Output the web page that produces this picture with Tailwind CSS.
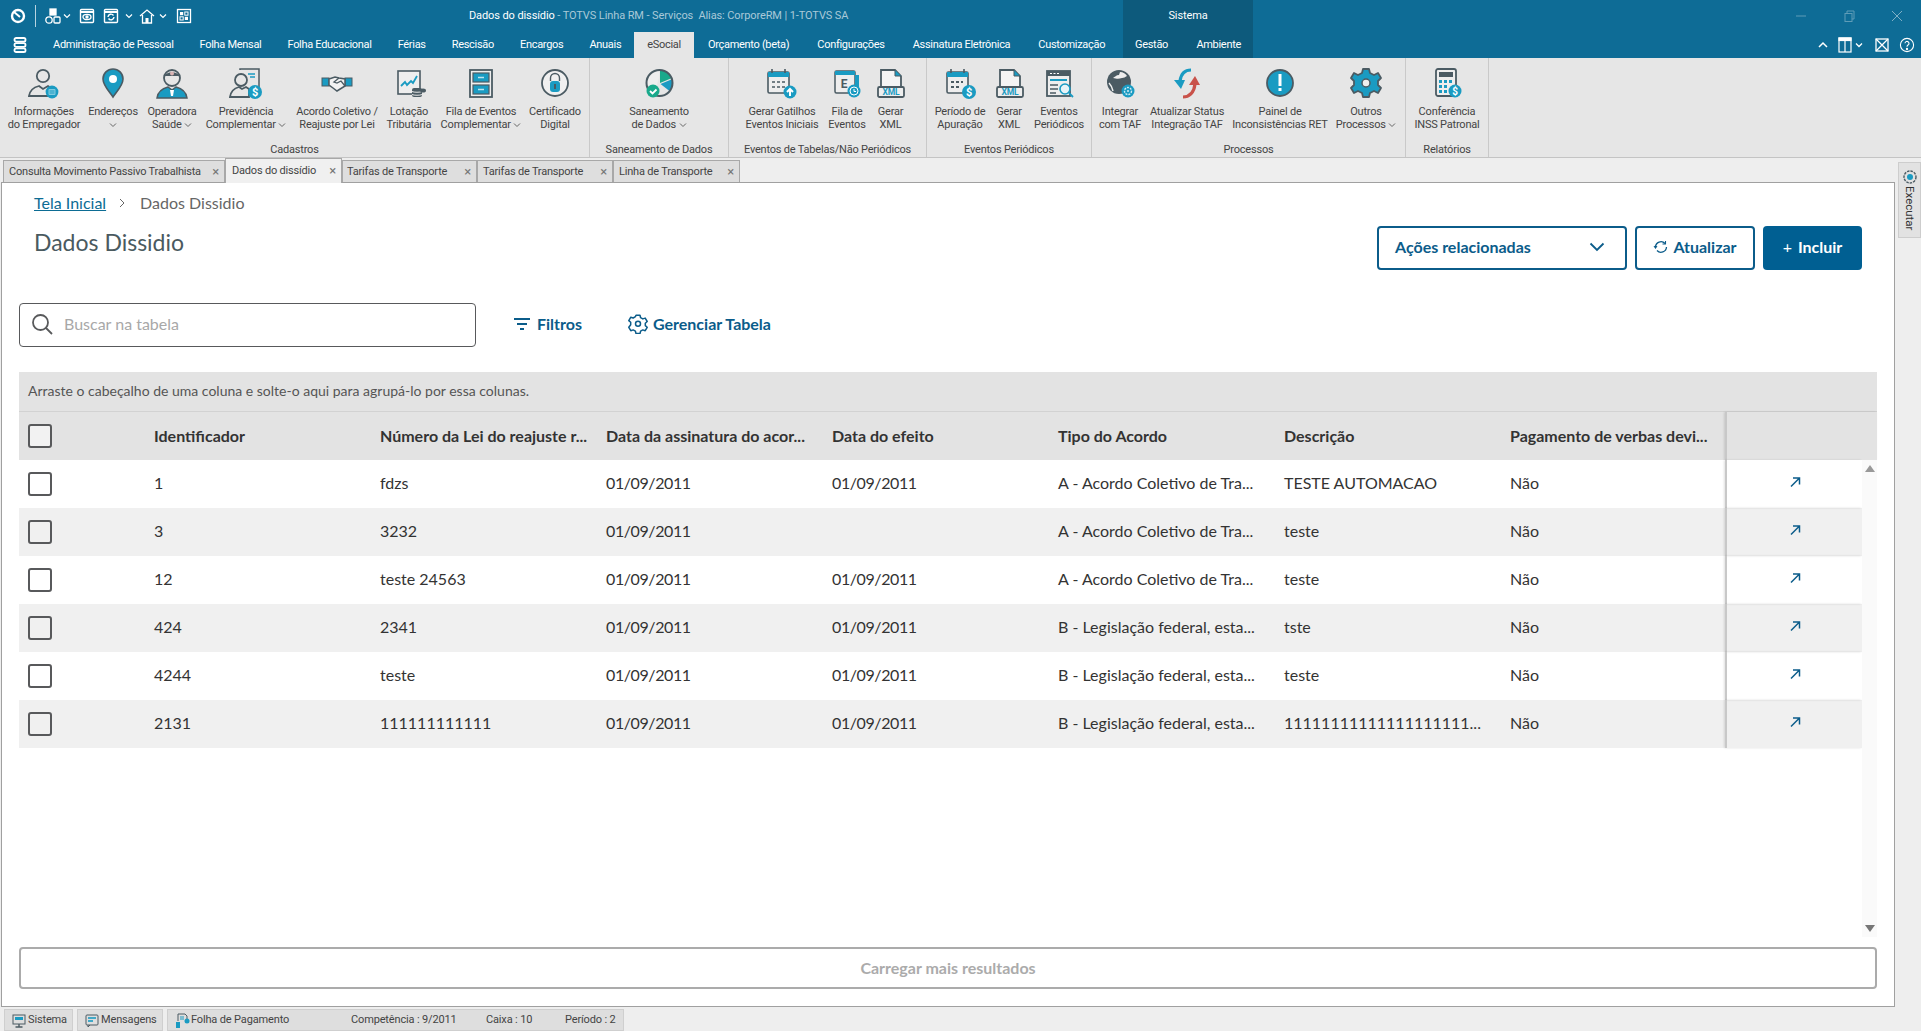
<!DOCTYPE html>
<html lang="pt-BR">
<head>
<meta charset="UTF-8">
<title>Dados do dissídio</title>
<script src="https://cdn.jsdelivr.net/npm/@tailwindcss/browser@4"></script>
</head>
<body class="bg-[#eeeeee] font-['Roboto',sans-serif] overflow-hidden">
<div class="relative h-[1031px] w-full flex flex-col overflow-hidden">

  <!-- Title bar -->
  <div class="h-[32px] bg-[#0e6c96] relative flex items-center text-white text-[11px] tracking-[-0.1px] shrink-0">
    <svg class="ml-[8px] w-[20px] h-[20px]" viewBox="0 0 20 20" fill="none" stroke="#fff" stroke-width="2.4"><circle cx="10" cy="10" r="6"/><path d="M6 6l6 5" stroke-width="2"/></svg>
    <div class="w-px h-[22px] bg-white/70 ml-[7px]"></div>
    <svg class="ml-[8px] w-[18px] h-[18px]" viewBox="0 0 18 18" fill="none" stroke="#fff" stroke-width="1.3"><rect x="6" y="2" width="6" height="6" fill="#fff"/><circle cx="5" cy="13" r="3.2"/><rect x="10" y="10" width="6" height="6" rx="1"/></svg>
    <svg class="ml-[1px] w-[8px] h-[8px]" viewBox="0 0 8 8" fill="none" stroke="#fff" stroke-width="1.2"><path d="M1 2.5l3 3 3-3"/></svg>
    <svg class="ml-[8px] w-[16px] h-[16px]" viewBox="0 0 16 16" fill="none" stroke="#fff" stroke-width="1.4"><rect x="1.5" y="1.5" width="13" height="13" rx="1"/><path d="M2 4h12" stroke-width="2"/><ellipse cx="8" cy="9" rx="4" ry="2.6"/><circle cx="8" cy="9" r="1" fill="#fff"/></svg>
    <svg class="ml-[8px] w-[16px] h-[16px]" viewBox="0 0 16 16" fill="none" stroke="#fff" stroke-width="1.4"><rect x="1.5" y="1.5" width="13" height="13" rx="1"/><path d="M2 4h12" stroke-width="2"/><path d="M5 9a3 3 0 0 1 5.5-1.5M11 9a3 3 0 0 1-5.5 1.5"/></svg>
    <svg class="ml-[6px] w-[8px] h-[8px]" viewBox="0 0 8 8" fill="none" stroke="#fff" stroke-width="1.2"><path d="M1 2.5l3 3 3-3"/></svg>
    <svg class="ml-[5px] w-[18px] h-[18px]" viewBox="0 0 18 18" fill="none" stroke="#fff" stroke-width="1.3"><path d="M2 9l7-6 7 6M4.500 8v8h9V8"/><rect x="7.500" y="11" width="3" height="5" fill="#fff" stroke="none"/></svg>
    <svg class="ml-[3px] w-[8px] h-[8px]" viewBox="0 0 8 8" fill="none" stroke="#fff" stroke-width="1.2"><path d="M1 2.5l3 3 3-3"/></svg>
    <svg class="ml-[9px] w-[16px] h-[16px]" viewBox="0 0 16 16" fill="none" stroke="#fff" stroke-width="1.3"><rect x="1.500" y="1.500" width="13" height="13"/><rect x="4" y="4" width="3.200" height="3.200" fill="#fff" stroke="none"/><rect x="8.800" y="4" width="3.200" height="3.200" stroke-width="1"/><rect x="4" y="8.800" width="3.200" height="3.200" stroke-width="1"/><rect x="8.800" y="8.800" width="3.200" height="3.200" fill="#fff" stroke="none"/></svg>
    <div class="absolute left-[469px] top-0 h-full pt-[1px] flex items-center whitespace-nowrap">Dados do dissídio<span class="text-[#a9c9d8]">&nbsp;- TOTVS Linha RM - Serviços&nbsp;&nbsp;Alias: CorporeRM | 1-TOTVS SA</span></div>
    <div class="absolute left-[1123px] top-0 w-[130px] h-full pt-[1px] bg-[#0d5a7c] flex items-center justify-center">Sistema</div>
    <div class="absolute right-0 top-0 h-full flex items-center">
      <svg class="w-[12px] h-[12px] mr-[36px]" viewBox="0 0 12 12" stroke="#5f9cb7" fill="none"><path d="M1 6h10"/></svg>
      <svg class="w-[12px] h-[12px] mr-[36px]" viewBox="0 0 12 12" stroke="#5f9cb7" fill="none"><rect x="2" y="3.500" width="7" height="8"/><path d="M4 3.500V1h7v8H9"/></svg>
      <svg class="w-[12px] h-[12px] mr-[18px]" viewBox="0 0 12 12" stroke="#7fb0c6" fill="none"><path d="M1 1l10 10M11 1L1 11"/></svg>
    </div>
  </div>

  <!-- Menu row -->
  <div class="h-[26px] bg-[#0e6c96] relative flex items-stretch text-white text-[11px] tracking-[-0.3px] whitespace-nowrap shrink-0">
    <div class="w-[40px] flex items-center justify-center">
      <svg class="w-[14px] h-[16px]" viewBox="0 0 14 16" fill="none" stroke="#fff" stroke-width="1.8"><rect x="1.500" y="1" width="11" height="3.600" rx="1.600"/><rect x="1.500" y="6.200" width="11" height="3.600" rx="1.600"/><rect x="1.500" y="11.400" width="11" height="3.600" rx="1.600"/></svg>
    </div>
    <div class="flex items-center pt-[1px] px-[13px]">Administração de Pessoal</div>
    <div class="flex items-center pt-[1px] px-[13px]">Folha Mensal</div>
    <div class="flex items-center pt-[1px] px-[13px]">Folha Educacional</div>
    <div class="flex items-center pt-[1px] px-[13px]">Férias</div>
    <div class="flex items-center pt-[1px] px-[13px]">Rescisão</div>
    <div class="flex items-center pt-[1px] px-[13px]">Encargos</div>
    <div class="flex items-center pt-[1px] px-[13px]">Anuais</div>
    <div class="flex items-center pt-[1px] px-[13px] bg-[#e6e6e6] text-[#444]">eSocial</div>
    <div class="flex items-center pt-[1px] px-[14px]">Orçamento (beta)</div>
    <div class="flex items-center pt-[1px] px-[14px]">Configurações</div>
    <div class="flex items-center pt-[1px] px-[14px]">Assinatura Eletrônica</div>
    <div class="flex items-center pt-[1px] px-[14px]">Customização</div>
    <div class="absolute left-[1123px] top-0 w-[130px] h-full pt-[1px] bg-[#0d5a7c] flex items-center justify-between px-[12px]"><span>Gestão</span><span>Ambiente</span></div>
    <div class="absolute right-0 top-0 h-full flex items-center">
      <svg class="w-[10px] h-[8px] mr-[10px]" viewBox="0 0 10 8" fill="none" stroke="#fff" stroke-width="1.5"><path d="M1 6l4-4 4 4"/></svg>
      <svg class="w-[14px] h-[16px]" viewBox="0 0 14 16" fill="none" stroke="#fff" stroke-width="1.2"><rect x="1" y="1" width="12" height="14"/><rect x="1" y="1" width="12" height="2.500" fill="#fff"/><path d="M7 2v13"/></svg>
      <svg class="w-[8px] h-[8px] ml-[3px] mr-[12px]" viewBox="0 0 8 8" fill="none" stroke="#fff" stroke-width="1.3"><path d="M1 2.500l3 3 3-3"/></svg>
      <svg class="w-[14px] h-[14px] mr-[10px]" viewBox="0 0 14 14" fill="none" stroke="#fff" stroke-width="1.3"><rect x="1" y="1" width="12" height="12"/><path d="M1 1l12 12M13 1L1 13"/></svg>
      <svg class="w-[16px] h-[16px] mr-[6px]" viewBox="0 0 16 16" fill="none" stroke="#fff" stroke-width="1.1"><circle cx="8" cy="8" r="6.600"/><path d="M6 6.300a2 2 0 1 1 3 1.800c-.7.4-1 .8-1 1.700"/><circle cx="8" cy="12" r=".6" fill="#fff"/></svg>
    </div>
  </div>

  <!-- Ribbon -->
  <div class="h-[100px] bg-[#e6e6e6] border-b border-[#c4c4c4] flex text-[11px] tracking-[-0.2px] leading-[13px] text-[#444] shrink-0">

    <section class="w-[590px] border-r border-[#c9c9c9] flex flex-col">
      <div class="flex-1 flex pt-[8px] text-center whitespace-nowrap">
        <div class="w-[88px] flex flex-col items-center">
          <svg class="w-[36px] h-[36px] mb-[3px]" viewBox="0 0 36 36"><circle cx="17" cy="10" r="6.200" fill="none" stroke="#4b5b63" stroke-width="1.800"/><path d="M3 30c1-7 6-9 10-10l4 3 5-3 3 2v8z" fill="none" stroke="#4b5b63" stroke-width="1.800"/><circle cx="26" cy="26" r="6.400" fill="#1a9bc2"/><rect x="22.500" y="23" width="7" height="6" rx="1" fill="#7fcbe0"/><path d="M23.500 25h5M23.500 27h5" stroke="#1a9bc2"/></svg>
          <span>Informações<br>do Empregador</span>
        </div>
        <div class="w-[50px] flex flex-col items-center">
          <svg class="w-[36px] h-[36px] mb-[3px]" viewBox="0 0 36 36"><path d="M18 31C13 24 8 19 8 13a10 10 0 0 1 20 0c0 6-5 11-10 18z" fill="#1a9bc2" stroke="#4b5b63" stroke-width="1.600"/><circle cx="18" cy="13" r="4" fill="#fff"/></svg>
          <span>Endereços<br><svg class="inline w-[8px] h-[8px]" viewBox="0 0 8 8" fill="none" stroke="#666"><path d="M1 2.500l3 3 3-3"/></svg></span>
        </div>
        <div class="w-[68px] flex flex-col items-center">
          <svg class="w-[36px] h-[36px] mb-[3px]" viewBox="0 0 36 36"><path d="M3 32c1-7 7-10 11-11l4 3 4-3c4 1 10 4 11 11z" fill="#1a9bc2" stroke="#4b5b63" stroke-width="1.500"/><path d="M16 24l1 6h2l1-6z" fill="#fff"/><circle cx="18" cy="12" r="8" fill="#e6e6e6" stroke="#4b5b63" stroke-width="1.800"/><path d="M10.500 10c2-5 13-5 15 0z" fill="#4b5b63"/><circle cx="18" cy="7.500" r="2" fill="#d9b3b3"/></svg>
          <span>Operadora<br>Saúde <svg class="inline w-[8px] h-[8px]" viewBox="0 0 8 8" fill="none" stroke="#666"><path d="M1 2.500l3 3 3-3"/></svg></span>
        </div>
        <div class="w-[80px] flex flex-col items-center">
          <svg class="w-[36px] h-[36px] mb-[3px]" viewBox="0 0 36 36"><path d="M12 4V3h19v22" fill="#e6e6e6" stroke="#4b5b63" stroke-width="1.500"/><path d="M20 8h7M22 11h5" stroke="#1a9bc2" stroke-width="1.600"/><circle cx="13" cy="14" r="6" fill="#e6e6e6" stroke="#4b5b63" stroke-width="1.800"/><path d="M2 31c1-7 5-9 9-10l3 2 4-2 3 2v8z" fill="#e6e6e6" stroke="#4b5b63" stroke-width="1.800"/><circle cx="27" cy="26" r="7" fill="#1a9bc2"/><text x="27" y="30" font-size="11" font-weight="700" fill="#fff" text-anchor="middle">$</text></svg>
          <span>Previdência<br>Complementar <svg class="inline w-[8px] h-[8px]" viewBox="0 0 8 8" fill="none" stroke="#666"><path d="M1 2.500l3 3 3-3"/></svg></span>
        </div>
        <div class="w-[102px] flex flex-col items-center">
          <svg class="w-[36px] h-[36px] mb-[3px]" viewBox="0 0 36 36"><rect x="3" y="12" width="7" height="8" fill="#1a9bc2" stroke="#4b5b63"/><rect x="26" y="12" width="7" height="8" fill="#1a9bc2" stroke="#4b5b63"/><path d="M10 13l6-2 4 1 6 1v7l-8 5-4-3-4-3z" fill="#f2f2f2" stroke="#4b5b63" stroke-width="1.500"/><path d="M20 12l-5 4 3 1 4-2 4 5" fill="none" stroke="#4b5b63" stroke-width="1.300"/></svg>
          <span>Acordo Coletivo /<br>Reajuste por Lei</span>
        </div>
        <div class="w-[42px] flex flex-col items-center">
          <svg class="w-[36px] h-[36px] mb-[3px] translate-x-[2px]" viewBox="0 0 36 36"><rect x="5" y="5" width="22" height="23" fill="#eee" stroke="#4b5b63" stroke-width="1.600"/><path d="M8 20l4-4 2 3 4-4 2 2 4-7" fill="none" stroke="#1a9bc2" stroke-width="1.800"/><rect x="19" y="22" width="10" height="9" rx="2" fill="#4b5b63"/><path d="M19 25.500c2 1 8 1 10 0M19 28.500c2 1 8 1 10 0" stroke="#e6e6e6" fill="none"/><ellipse cx="30" cy="24.500" rx="3" ry="2" fill="#4b5b63"/></svg>
          <span>Lotação<br>Tributária</span>
        </div>
        <div class="w-[102px] flex flex-col items-center">
          <svg class="w-[36px] h-[36px] mb-[3px]" viewBox="0 0 36 36"><rect x="7" y="4" width="22" height="27" fill="#eee" stroke="#4b5b63" stroke-width="1.800"/><rect x="10" y="7" width="16" height="9" fill="#1a9bc2" stroke="#4b5b63" stroke-width="1.200"/><rect x="10" y="19" width="16" height="9" fill="#1a9bc2" stroke="#4b5b63" stroke-width="1.200"/><path d="M15 11.500h6M15 23.500h6" stroke="#bfe4ee" stroke-width="1.400"/></svg>
          <span>Fila de Eventos<br>Complementar <svg class="inline w-[8px] h-[8px]" viewBox="0 0 8 8" fill="none" stroke="#666"><path d="M1 2.500l3 3 3-3"/></svg></span>
        </div>
        <div class="w-[46px] flex flex-col items-center">
          <svg class="w-[36px] h-[36px] mb-[3px]" viewBox="0 0 36 36"><circle cx="18" cy="17" r="13" fill="#f0f0f0" stroke="#4b5b63" stroke-width="1.800"/><path d="M13.500 15v-3a4.500 4.500 0 0 1 9 0v3" fill="none" stroke="#4b5b63" stroke-width="1.400"/><rect x="13" y="15" width="10" height="11" rx="3" fill="#1a9bc2"/><rect x="17" y="18" width="2" height="5" fill="#4b5b63"/></svg>
          <span>Certificado<br>Digital</span>
        </div>
      </div>
      <div class="h-[15px] text-center leading-[15px]">Cadastros</div>
    </section>

    <section class="w-[139px] border-r border-[#c9c9c9] flex flex-col">
      <div class="flex-1 flex flex-col items-center pt-[8px] text-center whitespace-nowrap">
        <svg class="w-[36px] h-[36px] mb-[3px]" viewBox="0 0 36 36"><path d="M19 4a13 13 0 0 1 12 8l-12 5z" fill="#19a98b"/><path d="M31.500 13a13 13 0 0 1-3 12l-9-7z" fill="#1a9bc2"/><path d="M18 5a13 13 0 0 0-12 14h10c1-5 3-8 2-14z" fill="#eee"/><circle cx="18.500" cy="17" r="13" fill="none" stroke="#4b5b63" stroke-width="2"/><circle cx="12" cy="25" r="6.500" fill="#19a98b"/><path d="M9 25l2.500 2.500 4-4" fill="none" stroke="#fff" stroke-width="1.800"/></svg>
        <span>Saneamento<br>de Dados <svg class="inline w-[8px] h-[8px]" viewBox="0 0 8 8" fill="none" stroke="#666"><path d="M1 2.500l3 3 3-3"/></svg></span>
      </div>
      <div class="h-[15px] text-center leading-[15px] whitespace-nowrap">Saneamento de Dados</div>
    </section>

    <section class="w-[198px] border-r border-[#c9c9c9] flex flex-col">
      <div class="flex-1 flex pt-[8px] pl-[11px] text-center whitespace-nowrap">
        <div class="w-[84px] flex flex-col items-center">
          <svg class="w-[36px] h-[36px] mb-[3px]" viewBox="0 0 36 36"><rect x="4" y="6" width="21" height="21" rx="1.500" fill="#eee" stroke="#4b5b63" stroke-width="1.600"/><rect x="4" y="6" width="21" height="5" fill="#1a9bc2"/><path d="M8 3v4M21 3v4" stroke="#4b5b63" stroke-width="1.600"/><path d="M8 16h3M13 16h3M18 16h3M8 21h3M13 21h3M18 21h3" stroke="#4b5b63" stroke-width="1.600"/><circle cx="26" cy="26" r="6.500" fill="#1a9bc2"/><path d="M26 30v-7M23 26l3-3 3 3" fill="none" stroke="#fff" stroke-width="2"/></svg>
          <span>Gerar Gatilhos<br>Eventos Iniciais</span>
        </div>
        <div class="w-[46px] flex flex-col items-center">
          <svg class="w-[36px] h-[36px] mb-[3px]" viewBox="0 0 36 36"><rect x="6" y="5" width="20" height="22" rx="1.500" fill="#eee" stroke="#4b5b63" stroke-width="1.500"/><rect x="6" y="5" width="20" height="4" fill="#1a9bc2"/><rect x="26" y="9" width="4" height="12" fill="#1a9bc2"/><text x="15" y="22" font-size="12" font-weight="700" fill="#4b5b63" text-anchor="middle">E</text><circle cx="25" cy="25" r="6.500" fill="#1a9bc2"/><circle cx="25" cy="25" r="4" fill="none" stroke="#fff"/><path d="M25 23v2.500h2" stroke="#fff" fill="none"/></svg>
          <span>Fila de<br>Eventos</span>
        </div>
        <div class="w-[41px] flex flex-col items-center">
          <svg class="w-[36px] h-[36px] mb-[3px]" viewBox="0 0 36 36"><path d="M8 22V4h14l6 6v12" fill="#f4f4f4" stroke="#4b5b63" stroke-width="1.800"/><path d="M22 4v6h6" fill="#1a9bc2" stroke="#4b5b63"/><rect x="5" y="21" width="26" height="10" rx="1.500" fill="#eee" stroke="#4b5b63" stroke-width="1.800"/><text x="18" y="29" font-size="8.500" font-weight="700" fill="#1a9bc2" text-anchor="middle">XML</text></svg>
          <span>Gerar<br>XML</span>
        </div>
      </div>
      <div class="h-[15px] text-center leading-[15px] whitespace-nowrap">Eventos de Tabelas/Não Periódicos</div>
    </section>

    <section class="w-[165px] border-r border-[#c9c9c9] flex flex-col">
      <div class="flex-1 flex pt-[8px] pl-[6px] text-center whitespace-nowrap">
        <div class="w-[54px] flex flex-col items-center">
          <svg class="w-[36px] h-[36px] mb-[3px]" viewBox="0 0 36 36"><rect x="5" y="6" width="21" height="21" rx="1.500" fill="#eee" stroke="#4b5b63" stroke-width="1.600"/><rect x="5" y="6" width="21" height="5" fill="#1a9bc2"/><path d="M9 3v4M22 3v4" stroke="#4b5b63" stroke-width="1.600"/><path d="M9 16h3M14 16h3M19 16h2M9 21h3M14 21h3" stroke="#4b5b63" stroke-width="2"/><circle cx="27" cy="26" r="7" fill="#1a9bc2"/><text x="27" y="30" font-size="11" font-weight="700" fill="#fff" text-anchor="middle">$</text></svg>
          <span>Período de<br>Apuração</span>
        </div>
        <div class="w-[44px] flex flex-col items-center">
          <svg class="w-[36px] h-[36px] mb-[3px] translate-x-[1px]" viewBox="0 0 36 36"><path d="M8 22V4h14l6 6v12" fill="#f4f4f4" stroke="#4b5b63" stroke-width="1.800"/><path d="M22 4v6h6" fill="#1a9bc2" stroke="#4b5b63"/><rect x="5" y="21" width="26" height="10" rx="1.500" fill="#eee" stroke="#4b5b63" stroke-width="1.800"/><text x="18" y="29" font-size="8.500" font-weight="700" fill="#1a9bc2" text-anchor="middle">XML</text></svg>
          <span>Gerar<br>XML</span>
        </div>
        <div class="w-[56px] flex flex-col items-center">
          <svg class="w-[36px] h-[36px] mb-[3px]" viewBox="0 0 36 36"><rect x="6" y="5" width="23" height="25" fill="#eee" stroke="#4b5b63" stroke-width="1.800"/><rect x="6" y="5" width="23" height="5" fill="#4b5b63"/><path d="M9 7.500h2M12.500 7.500h2M16 7.500h2" stroke="#fff"/><path d="M9 14h17" stroke="#1a9bc2" stroke-width="2"/><path d="M9 19h8M9 23h8M9 27h6" stroke="#4b5b63" stroke-width="1.500"/><circle cx="24" cy="23" r="5" fill="#e8f4f8" stroke="#1a9bc2" stroke-width="1.600"/><path d="M28 27l4 4" stroke="#1a9bc2" stroke-width="1.800"/></svg>
          <span>Eventos<br>Periódicos</span>
        </div>
      </div>
      <div class="h-[15px] text-center leading-[15px] whitespace-nowrap">Eventos Periódicos</div>
    </section>

    <section class="w-[314px] border-r border-[#c9c9c9] flex flex-col">
      <div class="flex-1 flex pt-[8px] pl-[6px] text-center whitespace-nowrap">
        <div class="w-[44px] flex flex-col items-center">
          <svg class="w-[36px] h-[36px] mb-[3px]" viewBox="0 0 36 36"><circle cx="17" cy="16" r="12" fill="#4b5b63"/><path d="M11 12c2-1 3-3 6-3l1-3c3 0 6 2 7 4-2 1-3 2-5 2-3 1-5 1-9 0z" fill="#eee"/><path d="M7 17c2 2 3 4 4 8" stroke="#eee" stroke-width="1.500" fill="none"/><circle cx="26" cy="25" r="6.500" fill="#1a9bc2"/><circle cx="26" cy="25" r="3.500" fill="none" stroke="#cfeaf2" stroke-width="1.400" stroke-dasharray="2 1"/><circle cx="26" cy="25" r="1" fill="#cfeaf2"/></svg>
          <span>Integrar<br>com TAF</span>
        </div>
        <div class="w-[90px] flex flex-col items-center">
          <svg class="w-[36px] h-[36px] mb-[3px]" viewBox="0 0 36 36"><path d="M22 4c-6 0-10 4-11 11" fill="none" stroke="#1a9bc2" stroke-width="3.200"/><path d="M5 14h11l-4 9z" fill="#1a9bc2"/><path d="M14 31c6 0 11-4 12-13" fill="none" stroke="#c9524a" stroke-width="3.200"/><path d="M20 19l6-9 5 9z" fill="#c9524a"/></svg>
          <span>Atualizar Status<br>Integração TAF</span>
        </div>
        <div class="w-[96px] flex flex-col items-center">
          <svg class="w-[36px] h-[36px] mb-[3px]" viewBox="0 0 36 36"><circle cx="18" cy="17" r="13" fill="#1a9bc2" stroke="#4b5b63" stroke-width="1.800"/><rect x="16.500" y="8" width="3" height="12" fill="#fff"/><rect x="16.500" y="22" width="3" height="3" fill="#fff"/></svg>
          <span>Painel de<br>Inconsistências RET</span>
        </div>
        <div class="w-[76px] flex flex-col items-center">
          <svg class="w-[36px] h-[36px] mb-[3px]" viewBox="0 0 36 36"><path d="M15 3h6l1 4 4 2 4-2 3 5-3 3v4l3 3-3 5-4-2-4 2-1 4h-6l-1-4-4-2-4 2-3-5 3-3v-4L3 12l3-5 4 2 4-2z" fill="#1a9bc2" stroke="#4b5b63" stroke-width="1.800" stroke-linejoin="round"/><circle cx="18" cy="17" r="4" fill="#eee" stroke="#4b5b63" stroke-width="1.500"/></svg>
          <span>Outros<br>Processos <svg class="inline w-[8px] h-[8px]" viewBox="0 0 8 8" fill="none" stroke="#666"><path d="M1 2.500l3 3 3-3"/></svg></span>
        </div>
      </div>
      <div class="h-[15px] text-center leading-[15px]">Processos</div>
    </section>

    <section class="w-[83px] border-r border-[#c9c9c9] flex flex-col">
      <div class="flex-1 flex flex-col items-center pt-[8px] text-center whitespace-nowrap">
        <svg class="w-[36px] h-[36px] mb-[3px]" viewBox="0 0 36 36"><rect x="7" y="3" width="20" height="27" rx="2" fill="#eee" stroke="#4b5b63" stroke-width="1.800"/><rect x="10" y="6" width="14" height="5" fill="#4b5b63"/><path d="M10 14h3v3h-3zM15 14h3v3h-3zM20 14h3v3h-3zM10 19h3v3h-3zM15 19h3v3h-3zM10 24h3v3h-3zM15 24h3v3h-3z" fill="#1a9bc2"/><circle cx="26" cy="25" r="6.500" fill="#1a9bc2"/><text x="26" y="29" font-size="10" font-weight="700" fill="#fff" text-anchor="middle">$</text></svg>
        <span>Conferência<br>INSS Patronal</span>
      </div>
      <div class="h-[15px] text-center leading-[15px]">Relatórios</div>
    </section>
  </div>

  <!-- Document tabs -->
  <div class="h-[24px] bg-[#eeeeee] flex items-end pl-[3px] text-[11px] tracking-[-0.2px] text-[#444] whitespace-nowrap shrink-0">
    <div class="w-[222px] h-[22px] pt-[1px] bg-[#dedede] border border-b-0 border-[#a8a8a8] flex items-center justify-between pl-[5px] pr-[5px]">Consulta Movimento Passivo Trabalhista<span class="text-[#777] text-[13px]">×</span></div>
    <div class="w-[117px] h-[25px] -mb-px bg-[#f0f0f0] border border-b-0 border-[#a8a8a8] flex items-center justify-between pl-[6px] pr-[5px] relative z-10">Dados do dissídio<span class="text-[#777] text-[13px]">×</span></div>
    <div class="w-[135px] h-[22px] pt-[1px] bg-[#dedede] border border-b-0 border-[#a8a8a8] flex items-center justify-between pl-[4px] pr-[5px]">Tarifas de Transporte<span class="text-[#777] text-[13px]">×</span></div>
    <div class="w-[136px] h-[22px] pt-[1px] bg-[#dedede] border border-b-0 border-[#a8a8a8] flex items-center justify-between pl-[5px] pr-[5px]">Tarifas de Transporte<span class="text-[#777] text-[13px]">×</span></div>
    <div class="w-[127px] h-[22px] pt-[1px] bg-[#dedede] border border-b-0 border-[#a8a8a8] flex items-center justify-between pl-[5px] pr-[5px]">Linha de Transporte<span class="text-[#777] text-[13px]">×</span></div>
  </div>

  <!-- Content panel -->
  <main class="ml-[1px] w-[1894px] h-[825px] bg-white border border-[#a0a0a0] px-[17px] font-['Lato',sans-serif] shrink-0">
    <div class="h-[120px] flex justify-between items-start px-[15px]">
      <div>
        <div class="h-[24px] mt-[8px] flex items-center text-[16px] text-[#666]">
          <a class="text-[#0c6c94] underline">Tela Inicial</a>
          <svg class="w-[8px] h-[10px] ml-[12px] mr-[14px]" viewBox="0 0 8 10" fill="none" stroke="#666"><path d="M2 1l4 4-4 4"/></svg>
          <span>Dados Dissidio</span>
        </div>
        <h1 class="mt-[11px] h-[32px] leading-[32px] text-[23px] text-[#4a5a5f]">Dados Dissidio</h1>
      </div>
      <div class="flex gap-[8px] mt-[43px] text-[16px] font-bold text-[#0b5c8a]">
        <button class="w-[250px] h-[44px] pb-[2px] border-2 border-[#0b5c8a] rounded-[4px] flex items-center justify-between pl-[16px] pr-[20px]">Ações relacionadas
          <svg class="w-[16px] h-[10px]" viewBox="0 0 16 10" fill="none" stroke="#0b5c8a" stroke-width="1.800"><path d="M1.500 1.500L8 8l6.500-6.500"/></svg>
        </button>
        <button class="w-[120px] h-[44px] pb-[2px] border-2 border-[#0b5c8a] rounded-[4px] flex items-center justify-center gap-[4px]">
          <svg class="w-[16px] h-[16px]" viewBox="0 0 16 16" fill="none" stroke="#0b5c8a" stroke-width="1.300"><path d="M2.500 8a5.500 5.500 0 0 1 9.500-3.500M13.500 8A5.500 5.500 0 0 1 4 11.500"/><path d="M12.500 2v3h-3M1 7l1.500 2L4 7" stroke-width="1.100"/></svg>Atualizar
        </button>
        <button class="w-[99px] h-[44px] pb-[2px] bg-[#005f92] rounded-[4px] text-white flex items-center justify-center gap-[6px]"><span class="font-normal">+</span>Incluir</button>
      </div>
    </div>

    <div class="h-[44px] flex items-center text-[16px]">
      <div class="w-[457px] h-[44px] pb-[2px] border border-[#58595b] rounded-[4px] flex items-center pl-[10px] text-[#a8a8a8]">
        <svg class="w-[24px] h-[24px] mr-[10px]" viewBox="0 0 24 24" fill="none" stroke="#58595b" stroke-width="1.800"><circle cx="10.500" cy="10.500" r="7.500"/><path d="M16 16l6 6"/></svg>
        Buscar na tabela
      </div>
      <div class="ml-[37px] pb-[2px] flex items-center gap-[6px] font-bold text-[#0b5c8a]">
        <svg class="w-[18px] h-[14px]" viewBox="0 0 18 14" stroke="#0b5c8a" stroke-width="2"><path d="M1 2h16M4 7h10M7 12h4"/></svg>Filtros
      </div>
      <div class="ml-[46px] pb-[2px] flex items-center gap-[5px] font-bold text-[#0b5c8a]">
        <svg class="w-[20px] h-[20px]" viewBox="0 0 20 20" fill="none" stroke="#0b5c8a" stroke-width="1.500" stroke-linejoin="round"><path d="M8 1.500h4l.6 2.500 2.200 1.200 2.400-.8 2 3.400-1.900 1.700v2.400l1.900 1.700-2 3.400-2.400-.8-2.200 1.200-.6 2.500H8l-.6-2.500-2.200-1.200-2.400.8-2-3.400L2.700 11V8.600L.8 6.900l2-3.400 2.400.8L7.400 3z" transform="translate(0 -.3)"/><circle cx="10" cy="9.700" r="2.500"/></svg>Gerenciar Tabela
      </div>
    </div>

    <div class="mt-[25px] h-[40px] pb-[2px] bg-[#e3e3e3] border-b border-[#d2d2d2] flex items-center pl-[9px] text-[14px] text-[#555]">Arraste o cabeçalho de uma coluna e solte-o aqui para agrupá-lo por essa colunas.</div>

    <div class="h-[48px] bg-[#e3e3e3] grid grid-cols-[124px_repeat(7,226px)_1fr] items-center text-[16px] font-bold text-[#333] whitespace-nowrap">
      <div class="pl-[9px]"><div class="w-[24px] h-[24px] border-2 border-[#58595b] rounded-[3px] bg-[#f2f2f2]"></div></div>
      <div class="pl-[11px]">Identificador</div>
      <div class="pl-[11px]">Número da Lei do reajuste r...</div>
      <div class="pl-[11px]">Data da assinatura do acor...</div>
      <div class="pl-[11px]">Data do efeito</div>
      <div class="pl-[11px]">Tipo do Acordo</div>
      <div class="pl-[11px]">Descrição</div>
      <div class="pl-[11px]">Pagamento de verbas devi...</div>
      <div class="h-full border-l-2 border-[#c8c8c8] shadow-[-1px_0_2px_rgba(0,0,0,0.12)]"></div>
    </div>

    <div class="h-[477px] flex">
      <div class="w-[1843px] text-[16px] text-[#333] whitespace-nowrap">
        <div class="h-[48px] bg-white grid grid-cols-[124px_repeat(7,226px)_1fr] items-center">
          <div class="pl-[9px]"><div class="w-[24px] h-[24px] border-2 border-[#58595b] rounded-[3px]"></div></div>
          <div class="pl-[11px] pb-[2px]">1</div><div class="pl-[11px] pb-[2px]">fdzs</div><div class="pl-[11px] pb-[2px] tracking-[-0.4px]">01/09/2011</div><div class="pl-[11px] pb-[2px] tracking-[-0.4px]">01/09/2011</div><div class="pl-[11px] pb-[2px]">A - Acordo Coletivo de Tra...</div><div class="pl-[11px] pb-[2px]">TESTE AUTOMACAO</div><div class="pl-[11px] pb-[2px]">Não</div>
          <div class="h-full border-l-2 border-[#c8c8c8] shadow-[-1px_0_2px_rgba(0,0,0,0.12)] flex items-center justify-center pb-[4px]"><svg class="w-[12px] h-[12px]" viewBox="0 0 12 12" fill="none" stroke="#0b5c8a" stroke-width="1.500"><path d="M2 10.500L10 2.500M4 2h6.500v6.500"/></svg></div>
        </div>
        <div class="h-[48px] bg-[#f0f0f0] grid grid-cols-[124px_repeat(7,226px)_1fr] items-center">
          <div class="pl-[9px]"><div class="w-[24px] h-[24px] border-2 border-[#58595b] rounded-[3px]"></div></div>
          <div class="pl-[11px] pb-[2px]">3</div><div class="pl-[11px] pb-[2px]">3232</div><div class="pl-[11px] pb-[2px] tracking-[-0.4px]">01/09/2011</div><div class="pl-[11px] pb-[2px]"></div><div class="pl-[11px] pb-[2px]">A - Acordo Coletivo de Tra...</div><div class="pl-[11px] pb-[2px]">teste</div><div class="pl-[11px] pb-[2px]">Não</div>
          <div class="h-full border-l-2 border-[#c8c8c8] shadow-[-1px_0_2px_rgba(0,0,0,0.12)] flex items-center justify-center pb-[4px]"><svg class="w-[12px] h-[12px]" viewBox="0 0 12 12" fill="none" stroke="#0b5c8a" stroke-width="1.500"><path d="M2 10.500L10 2.500M4 2h6.500v6.500"/></svg></div>
        </div>
        <div class="h-[48px] bg-white grid grid-cols-[124px_repeat(7,226px)_1fr] items-center">
          <div class="pl-[9px]"><div class="w-[24px] h-[24px] border-2 border-[#58595b] rounded-[3px]"></div></div>
          <div class="pl-[11px] pb-[2px]">12</div><div class="pl-[11px] pb-[2px]">teste 24563</div><div class="pl-[11px] pb-[2px] tracking-[-0.4px]">01/09/2011</div><div class="pl-[11px] pb-[2px] tracking-[-0.4px]">01/09/2011</div><div class="pl-[11px] pb-[2px]">A - Acordo Coletivo de Tra...</div><div class="pl-[11px] pb-[2px]">teste</div><div class="pl-[11px] pb-[2px]">Não</div>
          <div class="h-full border-l-2 border-[#c8c8c8] shadow-[-1px_0_2px_rgba(0,0,0,0.12)] flex items-center justify-center pb-[4px]"><svg class="w-[12px] h-[12px]" viewBox="0 0 12 12" fill="none" stroke="#0b5c8a" stroke-width="1.500"><path d="M2 10.500L10 2.500M4 2h6.500v6.500"/></svg></div>
        </div>
        <div class="h-[48px] bg-[#f0f0f0] grid grid-cols-[124px_repeat(7,226px)_1fr] items-center">
          <div class="pl-[9px]"><div class="w-[24px] h-[24px] border-2 border-[#58595b] rounded-[3px]"></div></div>
          <div class="pl-[11px] pb-[2px]">424</div><div class="pl-[11px] pb-[2px]">2341</div><div class="pl-[11px] pb-[2px] tracking-[-0.4px]">01/09/2011</div><div class="pl-[11px] pb-[2px] tracking-[-0.4px]">01/09/2011</div><div class="pl-[11px] pb-[2px]">B - Legislação federal, esta...</div><div class="pl-[11px] pb-[2px]">tste</div><div class="pl-[11px] pb-[2px]">Não</div>
          <div class="h-full border-l-2 border-[#c8c8c8] shadow-[-1px_0_2px_rgba(0,0,0,0.12)] flex items-center justify-center pb-[4px]"><svg class="w-[12px] h-[12px]" viewBox="0 0 12 12" fill="none" stroke="#0b5c8a" stroke-width="1.500"><path d="M2 10.500L10 2.500M4 2h6.500v6.500"/></svg></div>
        </div>
        <div class="h-[48px] bg-white grid grid-cols-[124px_repeat(7,226px)_1fr] items-center">
          <div class="pl-[9px]"><div class="w-[24px] h-[24px] border-2 border-[#58595b] rounded-[3px]"></div></div>
          <div class="pl-[11px] pb-[2px]">4244</div><div class="pl-[11px] pb-[2px]">teste</div><div class="pl-[11px] pb-[2px] tracking-[-0.4px]">01/09/2011</div><div class="pl-[11px] pb-[2px] tracking-[-0.4px]">01/09/2011</div><div class="pl-[11px] pb-[2px]">B - Legislação federal, esta...</div><div class="pl-[11px] pb-[2px]">teste</div><div class="pl-[11px] pb-[2px]">Não</div>
          <div class="h-full border-l-2 border-[#c8c8c8] shadow-[-1px_0_2px_rgba(0,0,0,0.12)] flex items-center justify-center pb-[4px]"><svg class="w-[12px] h-[12px]" viewBox="0 0 12 12" fill="none" stroke="#0b5c8a" stroke-width="1.500"><path d="M2 10.500L10 2.500M4 2h6.500v6.500"/></svg></div>
        </div>
        <div class="h-[48px] bg-[#f0f0f0] grid grid-cols-[124px_repeat(7,226px)_1fr] items-center">
          <div class="pl-[9px]"><div class="w-[24px] h-[24px] border-2 border-[#58595b] rounded-[3px]"></div></div>
          <div class="pl-[11px] pb-[2px]">2131</div><div class="pl-[11px] pb-[2px]">111111111111</div><div class="pl-[11px] pb-[2px] tracking-[-0.4px]">01/09/2011</div><div class="pl-[11px] pb-[2px] tracking-[-0.4px]">01/09/2011</div><div class="pl-[11px] pb-[2px]">B - Legislação federal, esta...</div><div class="pl-[11px] pb-[2px]">11111111111111111111...</div><div class="pl-[11px] pb-[2px]">Não</div>
          <div class="h-full border-l-2 border-[#c8c8c8] shadow-[-1px_0_2px_rgba(0,0,0,0.12)] flex items-center justify-center pb-[4px]"><svg class="w-[12px] h-[12px]" viewBox="0 0 12 12" fill="none" stroke="#0b5c8a" stroke-width="1.500"><path d="M2 10.500L10 2.500M4 2h6.500v6.500"/></svg></div>
        </div>
      </div>
      <div class="w-[15px] bg-[#fafafa] flex flex-col items-center justify-between pt-[5px] pb-[5px]">
        <svg class="w-[10px] h-[7px]" viewBox="0 0 10 7" fill="#999"><path d="M5 0l5 7H0z"/></svg>
        <svg class="w-[10px] h-[7px]" viewBox="0 0 10 7" fill="#777"><path d="M0 0h10L5 7z"/></svg>
      </div>
    </div>

    <button class="mt-[10px] w-[1858px] h-[42px] border-2 border-[#ababab] rounded-[4px] text-[16px] font-bold text-[#ababab]">Carregar mais resultados</button>
  </main>

  <!-- Status bar -->
  <div class="flex-1 flex items-end pl-[4px] gap-[4px] text-[11px] tracking-[-0.15px] text-[#444] whitespace-nowrap">
    <div class="w-[69px] h-[22px] bg-[#dedede] border border-[#cfcfcf] flex items-center pl-[7px] pt-[1px] gap-[2px]">
      <svg class="w-[14px] h-[14px] shrink-0" viewBox="0 0 14 14" fill="none" stroke="#4b5b63"><rect x="1" y="1" width="12" height="9"/><rect x="3" y="3" width="8" height="3" fill="#1a9bc2" stroke="none"/><path d="M7 10v3M3.500 13h7" stroke-width="1.400"/></svg>Sistema</div>
    <div class="w-[86px] h-[22px] bg-[#dedede] border border-[#cfcfcf] flex items-center pl-[7px] pt-[1px] gap-[2px]">
      <svg class="w-[14px] h-[14px] shrink-0" viewBox="0 0 14 14" fill="none" stroke="#4b5b63"><rect x="1" y="1" width="12" height="10" rx="1"/><path d="M3 4h8" stroke="#1a9bc2" stroke-width="1.600"/><path d="M3 7h5" stroke="#1a9bc2" stroke-width="1.600"/><path d="M3 11v2l2-2"/></svg>Mensagens</div>
    <div class="w-[457px] h-[22px] bg-[#dedede] border border-[#cfcfcf] flex items-center pl-[7px] pt-[1px] relative">
      <svg class="w-[16px] h-[16px] shrink-0" viewBox="0 0 16 16" fill="none" stroke="#4b5b63"><path d="M3 8V1h7l2 2v3"/><path d="M5 4h4M5 6h4" stroke="#1a9bc2"/><rect x="1" y="9" width="4" height="6" fill="#1a9bc2" stroke="none"/><circle cx="12" cy="8" r="2.500" fill="#1a9bc2" stroke="none"/></svg>
      <span>Folha de Pagamento</span>
      <span class="absolute left-[183px]">Competência : 9/2011</span>
      <span class="absolute left-[318px]">Caixa : 10</span>
      <span class="absolute left-[397px]">Período : 2</span>
    </div>
  </div>

  <!-- Executar side tab -->
  <div class="absolute left-[1898px] top-[162px] w-[23px] h-[76px] bg-[#e2e2e2] border border-[#cdcdcd] flex flex-col items-center pt-[6px] text-[11.5px] text-[#333]">
    <svg class="w-[16px] h-[16px] shrink-0" viewBox="0 0 16 16" fill="none" stroke="#4b5b63"><circle cx="8" cy="8" r="6" stroke-width="1.400" stroke-dasharray="2.500 1"/><circle cx="8" cy="8" r="3" fill="#1a9bc2" stroke="none"/></svg>
    <span class="[writing-mode:vertical-rl] mt-[1px] leading-none">Executar</span>
  </div>
</div>
</body>
</html>
